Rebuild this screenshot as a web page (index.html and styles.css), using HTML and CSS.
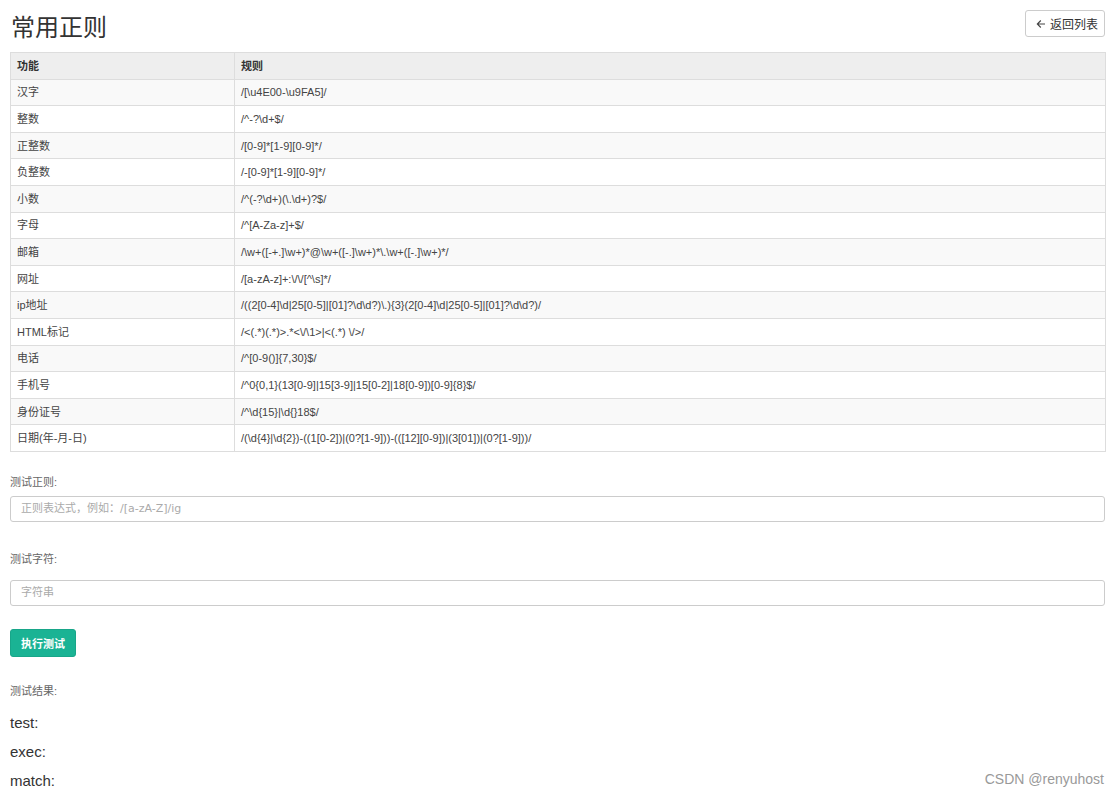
FILE: index.html
```html
<!DOCTYPE html>
<html lang="zh">
<head>
<meta charset="utf-8">
<title>常用正则</title>
<link rel="stylesheet" href="styles.css">
</head>
<body>
<div class="page">
  <div class="top">
    <h1 class="title">常用正则</h1>
    <a class="back-btn" href="#"><svg class="arrow" width="10" height="10" viewBox="0 0 10 10"><path d="M9 5H1.5M4.8 1.5L1.3 5l3.5 3.5" fill="none" stroke="#444" stroke-width="1.1"/></svg>返回列表</a>
  </div>
  <table class="rules">
    <thead>
      <tr><th class="c1">功能</th><th>规则</th></tr>
    </thead>
    <tbody>
      <tr><td>汉字</td><td>/[\u4E00-\u9FA5]/</td></tr>
      <tr><td>整数</td><td>/^-?\d+$/</td></tr>
      <tr><td>正整数</td><td>/[0-9]*[1-9][0-9]*/</td></tr>
      <tr><td>负整数</td><td>/-[0-9]*[1-9][0-9]*/</td></tr>
      <tr><td>小数</td><td>/^(-?\d+)(\.\d+)?$/</td></tr>
      <tr><td>字母</td><td>/^[A-Za-z]+$/</td></tr>
      <tr><td>邮箱</td><td>/\w+([-+.]\w+)*@\w+([-.]\w+)*\.\w+([-.]\w+)*/</td></tr>
      <tr><td>网址</td><td>/[a-zA-z]+:\/\/[^\s]*/</td></tr>
      <tr><td>ip地址</td><td>/((2[0-4]\d|25[0-5]|[01]?\d\d?)\.){3}(2[0-4]\d|25[0-5]|[01]?\d\d?)/</td></tr>
      <tr><td>HTML标记</td><td>/&lt;(.*)(.*)&gt;.*&lt;\/\1&gt;|&lt;(.*) \/&gt;/</td></tr>
      <tr><td>电话</td><td>/^[0-9()]{7,30}$/</td></tr>
      <tr><td>手机号</td><td>/^0{0,1}(13[0-9]|15[3-9]|15[0-2]|18[0-9])[0-9]{8}$/</td></tr>
      <tr><td>身份证号</td><td>/^\d{15}|\d{}18$/</td></tr>
      <tr><td>日期(年-月-日)</td><td>/(\d{4}|\d{2})-((1[0-2])|(0?[1-9]))-(([12][0-9])|(3[01])|(0?[1-9]))/</td></tr>
    </tbody>
  </table>

  <div class="form">
    <label class="lbl lbl-first">测试正则:</label>
    <input class="field field-first" type="text" placeholder="正则表达式，例如：/[a-zA-Z]/ig">
    <label class="lbl lbl-second">测试字符:</label>
    <input class="field field-second" type="text" placeholder="字符串">
    <button class="run-btn" type="button">执行测试</button>
    <div class="lbl lbl-result">测试结果:</div>
    <div class="results">
      <div class="res">test:</div>
      <div class="res">exec:</div>
      <div class="res">match:</div>
    </div>
  </div>
</div>
<div class="watermark">CSDN @renyuhost</div>
</body>
</html>
```
FILE: styles.css
```css
html, body {
  margin: 0;
  padding: 0;
  background: #fff;
}
body {
  font-family: "Liberation Sans", Arial, "Noto Sans CJK SC", sans-serif;
  color: #555;
  position: relative;
  min-height: 798px;
}
.page {
  width: 1096px;
  padding: 10px 0 0 10px;
}
.top {
  display: flex;
  justify-content: space-between;
  align-items: flex-start;
  height: 42px;
}
.title {
  margin: 0;
  font-weight: normal;
  font-size: 24px;
  line-height: 32px;
  color: #333;
  font-family: "Noto Sans CJK SC", "Liberation Sans", sans-serif;
  letter-spacing: 0;
  padding-left: 1px;
}
.back-btn {
  display: flex;
  align-items: center;
  gap: 4px;
  box-sizing: border-box;
  height: 27px;
  width: 80px;
  margin-right: 1px;
  padding: 0 0 0 10px;
  border: 1px solid #ccc;
  border-radius: 3px;
  font-size: 12px;
  color: #333;
  text-decoration: none;
  font-family: "Noto Sans CJK SC", sans-serif;
}
.arrow { display: block; }
.rules {
  width: 1096px;
  border-collapse: collapse;
  border: 1px solid #ddd;
  font-size: 11px;
  color: #444;
}
.rules th, .rules td {
  border: 1px solid #ddd;
  padding: 0 6px;
  height: 25.6px;
  text-align: left;
  line-height: 14px;
}
.rules th {
  background: #eee;
  font-weight: bold;
  color: #333;
}
.rules .c1 { width: 211px; }
.rules tbody tr:nth-child(odd) td { background: #f9f9f9; }
.rules tbody tr:nth-child(even) td { background: #fff; }
.form {
  display: flex;
  flex-direction: column;
  align-items: flex-start;
}
.lbl {
  font-size: 11px;
  line-height: 15px;
  color: #666;
}
.lbl-first { margin-top: 23px; margin-bottom: 6px; }
.lbl-second { margin-top: 30px; margin-bottom: 13px; }
.field {
  box-sizing: border-box;
  width: 1095px;
  height: 26px;
  border: 1px solid #ccc;
  border-radius: 3px;
  padding: 0 10px;
  font-size: 11px;
  font-family: "DejaVu Sans", "Noto Sans CJK SC", sans-serif;
  color: #555;
  outline: none;
}
.field::placeholder { color: #aaa; }
.run-btn {
  margin-top: 23px;
  box-sizing: border-box;
  width: 66px;
  height: 28px;
  border: 1px solid #18a689;
  border-radius: 3px;
  background: #1ab394;
  color: #fff;
  font-weight: bold;
  font-size: 11px;
  font-family: "Noto Sans CJK SC", sans-serif;
  padding: 0;
}
.lbl-result { margin-top: 27px; }
.results { margin-top: 9px; }
.res {
  font-size: 15px;
  line-height: 29px;
  color: #333;
}
.watermark {
  position: absolute;
  right: 15px;
  top: 771px;
  font-size: 14px;
  color: #999;
  font-family: "Liberation Sans", sans-serif;
}
```
